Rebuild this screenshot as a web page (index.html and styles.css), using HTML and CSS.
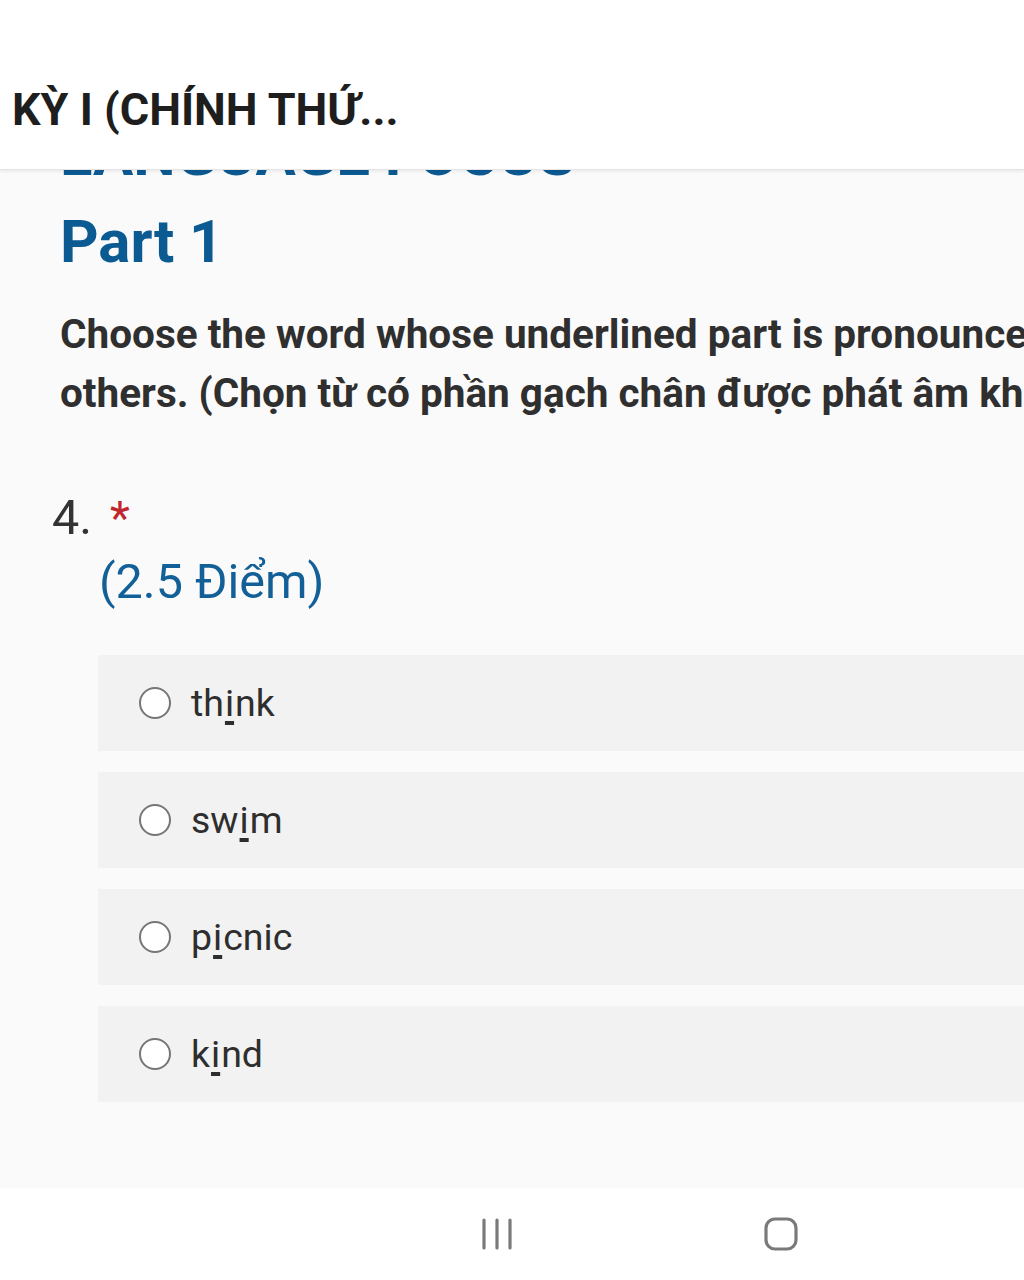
FILE: index.html
```html
<!DOCTYPE html>
<html lang="vi">
<head>
<meta charset="utf-8">
<title>Form</title>
<link rel="stylesheet" href="styles.css">
</head>
<body>
<div class="screen">
  <header class="topbar">
    <h1 class="topbar-title">KỲ I (CHÍNH THỨ...</h1>
  </header>
  <main class="content">
    <h2 class="section-title">LANGUAGE FOCUS</h2>
    <h2 class="part-title">Part 1</h2>
    <p class="part-desc">Choose the word whose underlined part is pronounced differently from the others. (Chọn từ có phần gạch chân được phát âm khác với các từ còn lại)</p>

    <div class="question">
      <div class="q-head"><span class="q-num">4.</span><span class="q-req">*</span></div>
      <div class="q-points">(2.5 Điểm)</div>
      <div class="options">
        <label class="option"><span class="radio"></span><span class="opt-text">th<u>i</u>nk</span></label>
        <label class="option"><span class="radio"></span><span class="opt-text">sw<u>i</u>m</span></label>
        <label class="option"><span class="radio"></span><span class="opt-text">p<u>i</u>cnic</span></label>
        <label class="option"><span class="radio"></span><span class="opt-text">k<u>i</u>nd</span></label>
      </div>
    </div>
  </main>
  <nav class="navbar">
    <span class="nav-btn nav-recents">
      <svg width="34" height="32" viewBox="0 0 34 32"><path d="M4 2v28M17 2v28M30 2v28" stroke="#7a7a7a" stroke-width="3.2" stroke-linecap="round" fill="none"/></svg>
    </span>
    <span class="nav-btn nav-home">
      <svg width="34" height="34" viewBox="0 0 34 34"><rect x="2" y="2" width="30" height="30" rx="9" stroke="#7a7a7a" stroke-width="3.2" fill="none"/></svg>
    </span>
  </nav>
</div>
</body>
</html>
```
FILE: styles.css
```css
* { box-sizing: border-box; }
html, body { margin: 0; padding: 0; }
body {
  background: #fafafa;
  font-family: Roboto, "Noto Sans", "Liberation Sans", sans-serif;
  color: #333;
  width: 1024px;
  height: 1280px;
  overflow: hidden;
}
.screen {
  display: flex;
  flex-direction: column;
  height: 1280px;
}
.topbar {
  position: relative;
  z-index: 2;
  height: 170px;
  flex: 0 0 auto;
  background: #fff;
  border-bottom: 1px solid #e4e4e4;
  box-shadow: 0 2px 3px rgba(0,0,0,0.06);
  padding: 82px 0 0 12px;
}
.topbar-title {
  margin: 0;
  font-size: 45px;
  line-height: 55px;
  font-weight: 700;
  color: #1e1e1e;
  white-space: nowrap;
}
.content {
  flex: 1 1 auto;
  overflow: hidden;
  padding-left: 60px;
}
.section-title {
  margin: -50px 0 0 0;
  font-size: 60px;
  line-height: 70px;
  font-weight: 700;
  color: #0b5a92;
  white-space: nowrap;
}
.part-title {
  margin: 16px 0 0 0;
  font-size: 60px;
  line-height: 72px;
  font-weight: 700;
  color: #0b5a92;
}
.part-desc {
  margin: 27px 0 0 0;
  font-size: 40.5px;
  line-height: 59px;
  font-weight: 700;
  color: #2f2f2f;
  width: 1440px;
}
.question {
  margin-top: 67px;
}
.q-head {
  display: flex;
  align-items: flex-start;
  margin-left: -8px;
  font-size: 48.5px;
  line-height: 56px;
  color: #333;
}
.q-req {
  color: #c0262c;
  margin-left: 18px;
  font-size: 46px;
}
.q-points {
  margin: 7px 0 0 39px;
  font-size: 48.5px;
  line-height: 58px;
  color: #135f97;
}
.options {
  margin: 44px 0 0 38px;
  display: flex;
  flex-direction: column;
  gap: 21px;
  width: 1000px;
}
.option {
  display: flex;
  align-items: center;
  height: 96px;
  background: #f2f2f2;
  padding-left: 41px;
}
.radio {
  width: 32px;
  height: 32px;
  border: 2px solid #767676;
  border-radius: 50%;
  background: #fff;
  flex: 0 0 auto;
}
.opt-text {
  margin-left: 20px;
  font-size: 37.5px;
  color: #2e2e2e;
}
.opt-text u {
  text-decoration-thickness: 4px;
  text-underline-offset: 5px;
  padding: 0 1px;
}
.navbar {
  flex: 0 0 92px;
  background: #fff;
  display: flex;
  align-items: center;
  padding-left: 480px;
  gap: 250px;
}
.nav-btn {
  display: flex;
  align-items: center;
  justify-content: center;
}
```
